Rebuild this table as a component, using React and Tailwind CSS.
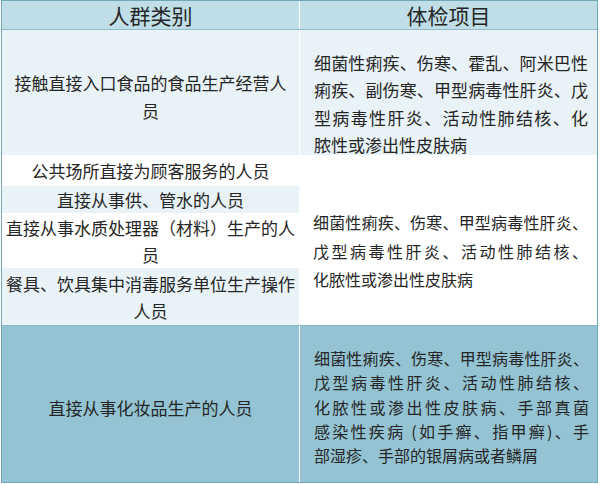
import React from "react";

const font = "font-['Noto_Sans_CJK_SC','Noto_Sans',sans-serif]";

function Lines({ lines, className }) {
  return (
    <div className={className}>
      {lines.map((line, i) => (
        <div
          key={i}
          className={
            i < lines.length - 1
              ? "whitespace-nowrap text-justify [text-align-last:justify]"
              : "whitespace-nowrap"
          }
        >
          {line}
        </div>
      ))}
    </div>
  );
}

export default function App() {
  return (
    <div className={`min-h-screen bg-white ${font} text-[#262626]`}>
      <div className="ml-px w-[597px] border border-[#6ea8b9] bg-white">
        {/* header */}
        <div className="grid grid-cols-[297px_297px] gap-x-px border-b border-[#8dbccb]">
          <div className="flex h-[28px] items-center justify-center bg-[#c0dee7] text-[21px] leading-none">人群类别</div>
          <div className="flex h-[28px] items-center justify-center bg-[#c0dee7] text-[21px] leading-none">体检项目</div>
        </div>

        {/* row 1 */}
        <div className="grid h-[125px] grid-cols-[297px_297px] gap-x-px">
          <div className="flex flex-col items-center justify-center bg-[#e9f2f6] pt-[6px] text-[17px] leading-[28px]">
            <div>接触直接入口食品的食品生产经营人</div>
            <div>员</div>
          </div>
          <div className="bg-[#e9f2f6] pl-[14px] pr-[9px] pt-[19px] text-[17px] leading-[27.3px]">
            <Lines
              lines={[
                "细菌性痢疾、伤寒、霍乱、阿米巴性",
                "痢疾、副伤寒、甲型病毒性肝炎、戊",
                "型病毒性肝炎、活动性肺结核、化",
                "脓性或渗出性皮肤病",
              ]}
            />
          </div>
        </div>

        {/* row 2 */}
        <div className="grid h-[170px] grid-cols-[297px_297px] gap-x-px">
          <div className="flex flex-col text-[17px] leading-[27px]">
            <div className="flex h-[31px] items-center justify-center bg-white">公共场所直接为顾客服务的人员</div>
            <div className="flex h-[27px] items-center justify-center bg-[#e9f2f6]">直接从事供、管水的人员</div>
            <div className="flex h-[55px] flex-col items-center justify-center bg-white">
              <div className="whitespace-nowrap">直接从事水质处理器（材料）生产的人</div>
              <div>员</div>
            </div>
            <div className="flex h-[57px] flex-col items-center justify-center bg-[#e9f2f6]">
              <div className="whitespace-nowrap">餐具、饮具集中消毒服务单位生产操作</div>
              <div>人员</div>
            </div>
          </div>
          <div className="bg-white pl-[13px] pr-[9px] pt-[53px] text-[16px] leading-[28.5px]">
            <Lines
              lines={[
                "细菌性痢疾、伤寒、甲型病毒性肝炎、",
                "戊型病毒性肝炎、活动性肺结核、",
                "化脓性或渗出性皮肤病",
              ]}
            />
          </div>
        </div>

        {/* row 3 */}
        <div className="grid h-[157px] grid-cols-[297px_297px] gap-x-px border-t border-[#86b8c8]">
          <div className="flex items-center justify-center bg-[#94c4d4] pt-[8px] text-[17px]">直接从事化妆品生产的人员</div>
          <div className="bg-[#94c4d4] pl-[14px] pr-[8px] pt-[20px] text-[16px] leading-[24.3px]">
            <Lines
              lines={[
                "细菌性痢疾、伤寒、甲型病毒性肝炎、",
                "戊型病毒性肝炎、活动性肺结核、",
                "化脓性或渗出性皮肤病、手部真菌",
                "感染性疾病 (如手癣、指甲癣)、手",
                "部湿疹、手部的银屑病或者鳞屑",
              ]}
            />
          </div>
        </div>
      </div>
    </div>
  );
}
